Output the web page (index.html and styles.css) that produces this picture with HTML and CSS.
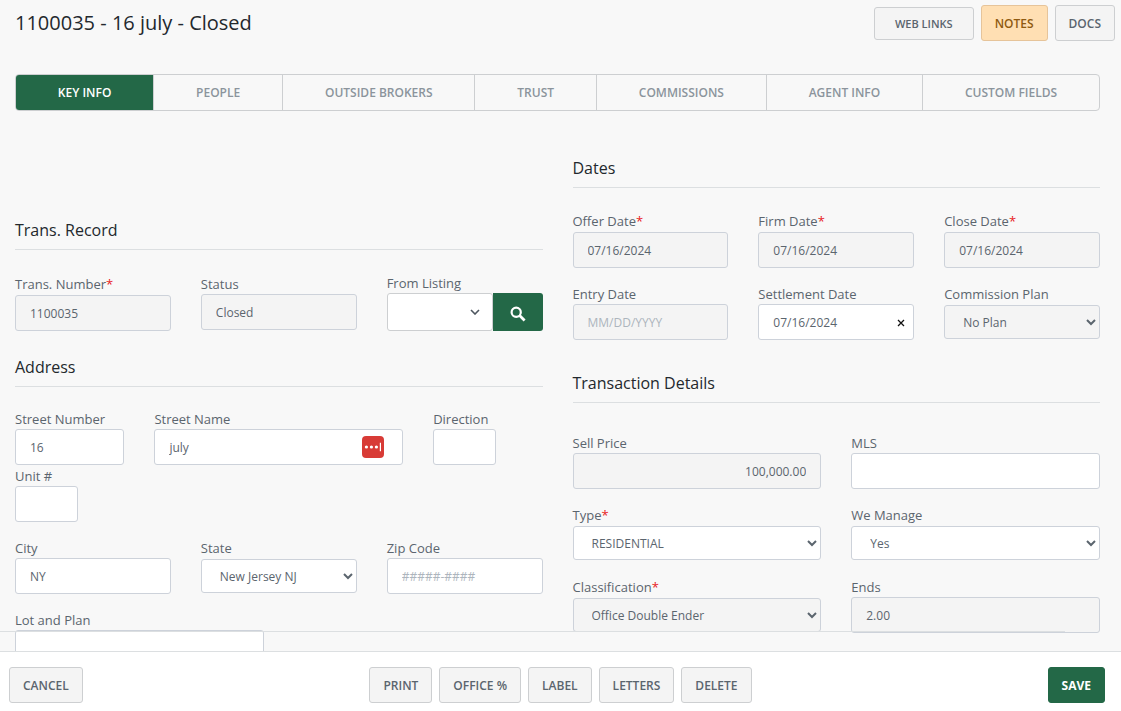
FILE: index.html
```html
<!DOCTYPE html>
<html lang="en">
  <head>
    <meta charset="utf-8">
    <title>1100035 - 16 july - Closed</title>
    <link rel="stylesheet" href="styles.css">
  </head>
  <body>

    <header class="page-header">
      <h1>1100035 - 16 july - Closed</h1>
      <div class="header-buttons">
        <button class="btn btn-links" type="button">WEB LINKS</button>
        <button class="btn btn-notes" type="button">NOTES</button>
        <button class="btn" type="button">DOCS</button>
      </div>
    </header>

    <nav class="tabs">
      <a class="tab active" href="#key-info">KEY INFO</a>
      <a class="tab" href="#people">PEOPLE</a>
      <a class="tab" href="#outside-brokers">OUTSIDE BROKERS</a>
      <a class="tab" href="#trust">TRUST</a>
      <a class="tab" href="#commissions">COMMISSIONS</a>
      <a class="tab" href="#agent-info">AGENT INFO</a>
      <a class="tab" href="#custom-fields">CUSTOM FIELDS</a>
    </nav>

    <main class="content">
      <form class="columns" id="key-info">

        <div class="column column-left">
          <section class="record">
            <h2>Trans. Record</h2>
            <div class="row">
              <div class="field col-4 required">
                <label for="transNumber">Trans. Number<span class="star">*</span></label>
                <input type="text" id="transNumber" value="1100035" readonly>
              </div>
              <div class="field col-4">
                <label for="status">Status</label>
                <input type="text" id="status" value="Closed" readonly>
              </div>
              <div class="field col-4 listing">
                <label for="fromListing">From Listing</label>
                <div class="listing-group">
                  <div class="listing-box">
                    <select id="fromListing"><option></option></select>
                    <svg class="chevron" viewBox="0 0 10 6" width="10" height="6"><path d="M1 1l4 4 4-4" fill="none" stroke="#4d565f" stroke-width="1.6"/></svg>
                  </div>
                  <button class="search" type="button" aria-label="Search">
                    <svg viewBox="0 0 16 16" width="16" height="16"><circle cx="6.2" cy="6.2" r="4.6" fill="none" stroke="#fff" stroke-width="2.2"/><path d="M9.6 9.6l5 5" stroke="#fff" stroke-width="2.8"/></svg>
                  </button>
                </div>
              </div>
            </div>
          </section>

          <section class="address">
            <h2>Address</h2>
            <div class="row">
              <div class="field col-3 tight">
                <label for="streetNumber">Street Number</label>
                <input type="text" id="streetNumber" value="16">
              </div>
              <div class="field col-6 tight">
                <label for="streetName">Street Name</label>
                <div class="input-wrap">
                  <input type="text" id="streetName" value="july">
                  <svg class="autofill" viewBox="0 0 22 22" width="22" height="22"><rect width="22" height="22" rx="4" fill="#d83b36"/><circle cx="4.4" cy="11" r="1.6" fill="#fff"/><circle cx="9.4" cy="11" r="1.6" fill="#fff"/><circle cx="14.4" cy="11" r="1.6" fill="#fff"/><path d="M18.4 6.8v8.4" stroke="#fff" stroke-width="1.2"/></svg>
                </div>
              </div>
              <div class="field col-2 tight">
                <label for="direction">Direction</label>
                <input type="text" id="direction">
              </div>
            </div>
            <div class="row">
              <div class="field col-2">
                <label for="unit">Unit #</label>
                <input type="text" id="unit">
              </div>
            </div>
            <div class="row">
              <div class="field col-4">
                <label for="city">City</label>
                <input type="text" id="city" value="NY">
              </div>
              <div class="field col-4 with-select">
                <label for="state">State</label>
                <select id="state"><option>New Jersey NJ</option></select>
              </div>
              <div class="field col-4">
                <label for="zip">Zip Code</label>
                <input type="text" id="zip" placeholder="#####-####">
              </div>
              <div class="field col-6">
                <label for="lotPlan">Lot and Plan</label>
                <input type="text" id="lotPlan">
              </div>
            </div>
          </section>
        </div>

        <div class="column">
          <section>
            <h2>Dates</h2>
            <div class="row">
              <div class="field col-4 required">
                <label for="offerDate">Offer Date<span class="star">*</span></label>
                <input type="text" id="offerDate" value="07/16/2024" readonly>
              </div>
              <div class="field col-4 required">
                <label for="firmDate">Firm Date<span class="star">*</span></label>
                <input type="text" id="firmDate" value="07/16/2024" readonly>
              </div>
              <div class="field col-4 required">
                <label for="closeDate">Close Date<span class="star">*</span></label>
                <input type="text" id="closeDate" value="07/16/2024" readonly>
              </div>
              <div class="field col-4">
                <label for="entryDate">Entry Date</label>
                <input type="text" id="entryDate" placeholder="MM/DD/YYYY" readonly>
              </div>
              <div class="field col-4">
                <label for="settlementDate">Settlement Date</label>
                <div class="input-wrap">
                  <input type="text" id="settlementDate" value="07/16/2024">
                  <button class="clear" type="button" aria-label="Clear date">
                    <svg viewBox="0 0 8 8" width="8" height="8"><path d="M1 1l6 6M7 1l-6 6" stroke="#111" stroke-width="1.3"/></svg>
                  </button>
                </div>
              </div>
              <div class="field col-4 with-select">
                <label for="commissionPlan">Commission Plan</label>
                <select class="locked" id="commissionPlan"><option>No Plan</option></select>
              </div>
            </div>
          </section>

          <section class="details">
            <h2>Transaction Details</h2>
            <div class="row">
              <div class="field col-6">
                <label for="sellPrice">Sell Price</label>
                <input class="amount" type="text" id="sellPrice" value="100,000.00" readonly>
              </div>
              <div class="field col-6">
                <label for="mls">MLS</label>
                <input type="text" id="mls">
              </div>
              <div class="field col-6 with-select">
                <label for="type">Type<span class="star">*</span></label>
                <select id="type"><option>RESIDENTIAL</option></select>
              </div>
              <div class="field col-6 with-select">
                <label for="weManage">We Manage</label>
                <select id="weManage"><option>Yes</option></select>
              </div>
              <div class="field col-6 with-select">
                <label for="classification">Classification<span class="star">*</span></label>
                <select class="locked" id="classification"><option>Office Double Ender</option></select>
              </div>
              <div class="field col-6">
                <label for="ends">Ends</label>
                <input type="text" id="ends" value="2.00" readonly>
              </div>
            </div>
          </section>
        </div>

      </form>
    </main>

    <footer class="page-footer">
      <div class="footer-left">
        <button class="btn" type="button">CANCEL</button>
      </div>
      <div class="footer-middle">
        <button class="btn" type="button">PRINT</button>
        <button class="btn" type="button">OFFICE %</button>
        <button class="btn" type="button">LABEL</button>
        <button class="btn" type="button">LETTERS</button>
        <button class="btn" type="button">DELETE</button>
      </div>
      <div class="footer-right">
        <button class="btn btn-save" type="submit" form="key-info">SAVE</button>
      </div>
    </footer>

  </body>
</html>
```

FILE: styles.css
```css
* {
  box-sizing: border-box;
}
body {
  display: flex;
  flex-direction: column;
  height: 100vh;
  margin: 0;
  background-color: #f8f8f8;
  color: #5b656e;
  font-family: "Open Sans", "Noto Sans", sans-serif;
  font-size: 12px;
}
h1, h2 {
  margin: 0;
  color: #23282d;
  font-weight: 400;
}
h1 {
  font-size: 20px;
  line-height: 36px;
}
h2 {
  height: 40px;
  margin-bottom: 23px;
  border-bottom: 1px solid #dcdfe1;
  font-size: 16px;
  line-height: 40px;
}
button, input, select {
  font-family: inherit;
}

/* header */
.page-header {
  display: flex;
  justify-content: space-between;
  padding: 5px 6px 0 15px;
}
.header-buttons {
  display: flex;
  align-items: center;
  gap: 7px;
}
.btn {
  height: 36px;
  padding: 0 13px;
  border: 1px solid #cdcfd1;
  border-radius: 3px;
  background-color: #f4f4f4;
  color: #5b656e;
  font-size: 12px;
  font-weight: 600;
  cursor: pointer;
}
.btn:hover {
  background-color: #eaeaea;
}
.btn-links {
  height: 33px;
  padding: 0 20px;
  font-size: 11px;
}
.btn-notes {
  border-color: #e6c49a;
  background-color: #ffdfb3;
  color: #8f5a10;
}
.btn-save {
  border-color: #236847;
  background-color: #236847;
  color: #fff;
  font-weight: 700;
}

/* tabs */
.tabs {
  display: flex;
  flex-shrink: 0;
  height: 37px;
  margin: 33px 21px 0 15px;
  border: 1px solid #cdcfd1;
  border-radius: 4px;
  overflow: hidden;
}
.tab {
  flex: 1 0 auto;
  border-right: 1px solid #cdcfd1;
  color: #8b949c;
  font-weight: 600;
  line-height: 35px;
  text-align: center;
  text-decoration: none;
}
.tab:last-child {
  border-right: none;
}
.tab.active {
  background-color: #236847;
  color: #fff;
}

/* form */
.content {
  flex: 1;
  min-height: 0;
  overflow-y: auto;
  scrollbar-width: none;
}
.columns {
  display: grid;
  grid-template-columns: 1fr 1fr;
  gap: 30px;
  padding: 37px 21px 20px 15px;
}
.column-left {
  padding-top: 62px;
}
.record h2 {
  margin-bottom: 24px;
}
.address h2 {
  margin-bottom: 22px;
}
.details {
  padding-top: 7px;
}
.details h2 {
  margin-bottom: 30px;
}
.row {
  display: grid;
  grid-template-columns: repeat(12, minmax(0, 1fr));
  column-gap: 30px;
}
.col-2 {
  grid-column: span 2;
}
.col-3 {
  grid-column: span 3;
}
.col-4 {
  grid-column: span 4;
}
.col-6 {
  grid-column: span 6;
}
.field {
  margin-bottom: 16px;
}
.with-select {
  margin-bottom: 17px;
}
.tight {
  margin-bottom: 1px;
}
.field label {
  display: block;
  font-size: 13px;
  line-height: 20px;
  white-space: nowrap;
}
.required label,
.with-select label {
  line-height: 21px;
}
.listing label {
  line-height: 19px;
}
.star {
  color: #e8211d;
}
input, select {
  display: block;
  width: 100%;
  height: 36px;
  padding: 0 14px;
  border: 1px solid #cdd2da;
  border-radius: 3px;
  background-color: #fff;
  color: #5b656e;
  font-size: 12px;
}
select {
  height: 34px;
  padding-right: 0;
}
input:read-only,
.locked {
  background-color: #f4f4f4;
}
input::placeholder {
  color: #adb5bd;
}
.amount {
  text-align: right;
}
.input-wrap,
.listing-box {
  position: relative;
}
.autofill {
  position: absolute;
  top: 7px;
  right: 19px;
}
.clear {
  position: absolute;
  top: 11px;
  right: 5px;
  width: 16px;
  height: 16px;
  padding: 4px;
  border: none;
  background: none;
  line-height: 0;
  cursor: pointer;
}
.listing-group {
  display: flex;
}
.listing-box {
  flex: 1;
}
.listing-box select {
  height: 38px;
  border-color: #cdcfd1;
  appearance: none;
}
.chevron {
  position: absolute;
  top: 16px;
  right: 13px;
  pointer-events: none;
}
.search {
  display: flex;
  align-items: center;
  justify-content: center;
  width: 50px;
  height: 38px;
  padding: 3px 0 0;
  border: none;
  border-radius: 0 3px 3px 0;
  background-color: #236847;
  cursor: pointer;
}

/* footer */
.page-footer {
  position: relative;
  display: grid;
  grid-template-columns: 1fr auto 1fr;
  flex-shrink: 0;
  padding: 15px 9px 8px;
  border-top: 1px solid #dcdfe1;
  background-color: #fff;
}
.page-footer::before {
  content: "";
  position: absolute;
  top: -21px;
  left: 0;
  width: 95%;
  border-top: 1px solid #dcdfe1;
}
.footer-middle {
  display: flex;
  gap: 7px;
}
.footer-right {
  padding-right: 7px;
  text-align: right;
}
```
